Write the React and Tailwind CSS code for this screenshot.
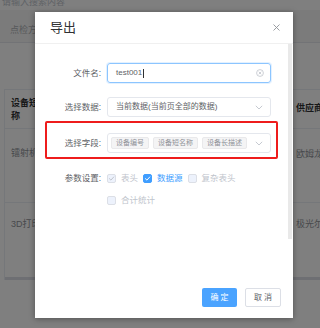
import React from 'react';

const Check = ({ color }) => (
    <svg width="7" height="7" viewBox="0 0 10 10" fill="none">
        <path d="M2 5.2 L4.2 7.3 L8.2 2.8" stroke={color} strokeWidth="1.4" strokeLinecap="round" strokeLinejoin="round" />
    </svg>
);

const Chevron = () => (
    <svg width="8" height="5" viewBox="0 0 8 5" fill="none">
        <path d="M0.8 0.8 L4 4 L7.2 0.8" stroke="#c0c4cc" strokeWidth="0.9" />
    </svg>
);

const Row = ({ label, children }) => (
    <div className="flex items-center h-[20px]">
        <div className="w-[54px] mr-[6px] text-right text-[8.5px] text-[#606266] whitespace-nowrap">{label}</div>
        {children}
    </div>
);

const Option = ({ state, text }) => {
    const box =
        state === 'on'
            ? 'bg-[#409eff] border-[#409eff]'
            : 'bg-[#edf2fc] border-[#dcdfe6]';
    return (
        <div className="flex items-center gap-[5px] mr-[5px]">
            <span className={`w-[9px] h-[9px] border rounded-[2px] flex items-center justify-center ${box}`}>
                {state === 'on' && <Check color="#ffffff" />}
                {state === 'disabledOn' && <Check color="#c0c4cc" />}
            </span>
            <span className={`text-[8.5px] whitespace-nowrap ${state === 'on' ? 'text-[#409eff]' : 'text-[#c0c4cc]'}`}>{text}</span>
        </div>
    );
};

const Tag = ({ children }) => (
    <span className="h-[12px] px-[4px] flex items-center bg-[#f4f4f5] border border-[#e9e9eb] rounded-[2px] text-[7px] text-[#909399] whitespace-nowrap">
        {children}
    </span>
);

const App = () => {
    return (
        <div
            className="relative w-[320px] h-[328px] overflow-hidden bg-white"
            style={{ fontFamily: '"Liberation Sans", "Noto Sans CJK SC", sans-serif' }}
        >
            {/* page behind the dialog */}
            <div className="h-[10px] overflow-hidden pl-[2px]">
                <div className="-mt-[5px] leading-[14px] text-[9px] text-[#c0c4cc] whitespace-nowrap">请输入搜索内容</div>
            </div>
            <div className="h-[33px] bg-[#f7f7f7] border-b border-[#e4e7ed] flex items-end pb-[5px] pl-[10px]">
                <span className="w-[25px] overflow-hidden text-[9px] text-[#b0b3b8] whitespace-nowrap">点检方案</span>
            </div>
            <div className="h-[46px]" />
            <div className="ml-[4px] border-l border-[#ebeef5] text-[9px]">
                <div className="h-[40px] border-t border-b border-[#ebeef5] flex">
                    <div className="w-[31px] overflow-hidden pl-[6px] pt-[7px] leading-[13px] font-bold text-[#303133]">
                        <div className="w-[40px]">设备短名称</div>
                    </div>
                    <div className="flex-1" />
                    <div className="w-[28px] pl-[4px] flex items-center font-bold text-[#303133] whitespace-nowrap overflow-hidden">供应商</div>
                </div>
                <div className="h-[74px] border-b border-[#ebeef5] flex">
                    <div className="w-[31px] overflow-hidden pl-[6px] pt-[18px] text-[#909399] whitespace-nowrap">镭射机2号</div>
                    <div className="flex-1" />
                    <div className="w-[28px] pl-[4px] pt-[19px] text-[#909399] whitespace-nowrap overflow-hidden">欧姆龙</div>
                </div>
                <div className="h-[77px] border-b-[3px] border-[#dcdfe6] flex">
                    <div className="w-[31px] overflow-hidden pl-[6px] pt-[15px] text-[#909399] whitespace-nowrap">3D打印机</div>
                    <div className="flex-1" />
                    <div className="w-[28px] pl-[4px] pt-[15px] text-[#909399] whitespace-nowrap overflow-hidden">极光尔沃</div>
                </div>
            </div>

            {/* overlay */}
            <div className="absolute inset-0 bg-black/50" />

            {/* dialog */}
            <div className="absolute left-[35px] top-[12px] w-[258px] h-[306px] bg-white flex flex-col shadow-[0_1px_6px_rgba(0,0,0,0.35)]">
                <div className="h-[32px] shrink-0 border-b border-[#f0f0f0] flex items-center justify-between pl-[15px] pr-[13px]">
                    <span className="text-[13px] text-[#303133]">导出</span>
                    <svg width="7" height="7" viewBox="0 0 7 7" fill="none">
                        <path d="M0.5 0.5 L6.5 6.5 M6.5 0.5 L0.5 6.5" stroke="#909399" strokeWidth="0.9" />
                    </svg>
                </div>

                <div className="h-[195px] shrink-0 flex">
                    <div className="flex-1 pt-[19px]">
                        <div className="ml-[12px]">
                            <Row label="文件名:">
                                <div className="w-[164px] h-[20px] border border-[#8cc5ff] shadow-[0_0_0_1px_rgba(64,158,255,0.15)] rounded-[3px] flex items-center pl-[8px] pr-[6px]">
                                    <span className="text-[8px] text-[#606266]">test001</span>
                                    <span className="w-px h-[9px] bg-[#303133] ml-[1px]" />
                                    <div className="flex-1" />
                                    <svg width="8" height="8" viewBox="0 0 8 8" fill="none">
                                        <circle cx="4" cy="4" r="3.4" stroke="#c0c4cc" strokeWidth="0.8" />
                                        <path d="M2.7 2.7 L5.3 5.3 M5.3 2.7 L2.7 5.3" stroke="#c0c4cc" strokeWidth="0.8" />
                                    </svg>
                                </div>
                            </Row>
                            <div className="mt-[14px]">
                                <Row label="选择数据:">
                                    <div className="w-[164px] h-[20px] border border-[#e4e7ed] rounded-[3px] flex items-center justify-between pl-[8px] pr-[7px]">
                                        <span className="text-[8px] text-[#606266] whitespace-nowrap">当前数据(当前页全部的数据)</span>
                                        <Chevron />
                                    </div>
                                </Row>
                            </div>
                        </div>

                        <div className="ml-[10px] mt-[4px] w-[233px] border-2 border-[#ee1c1c] rounded-[2px] pt-[10px] pb-[4px]">
                            <Row label="选择字段:">
                                <div className="w-[164px] h-[20px] border border-[#e4e7ed] rounded-[3px] flex items-center pl-[3px] pr-[7px]">
                                    <div className="flex items-center gap-[4px]">
                                        <Tag>设备编号</Tag>
                                        <Tag>设备短名称</Tag>
                                        <Tag>设备长描述</Tag>
                                    </div>
                                    <div className="flex-1" />
                                    <Chevron />
                                </div>
                            </Row>
                        </div>

                        <div className="ml-[12px] mt-[12px]">
                            <div className="flex items-center h-[14px]">
                                <div className="w-[54px] mr-[6px] text-right text-[8.5px] text-[#606266] whitespace-nowrap">参数设置:</div>
                                <Option state="disabledOn" text="表头" />
                                <Option state="on" text="数据源" />
                                <Option state="off" text="复杂表头" />
                            </div>
                            <div className="flex items-center h-[14px] mt-[8px] pl-[60px]">
                                <Option state="off" text="合计统计" />
                            </div>
                        </div>
                    </div>
                    <div className="w-[4px] mr-[1px] bg-[#e9e9e9]" />
                </div>

                <div className="flex-1 flex items-end justify-end gap-[8px] pr-[12px] pb-[11px]">
                    <button className="w-[35px] h-[19px] rounded-[2px] bg-[#4aa3ff] text-white text-[8px] tracking-[2px] pl-[2px]">确定</button>
                    <button className="w-[36px] h-[19px] rounded-[2px] bg-white border border-[#dcdfe6] text-[#606266] text-[8px] tracking-[2px] pl-[2px]">取消</button>
                </div>
            </div>
        </div>
    );
};

export default App;
